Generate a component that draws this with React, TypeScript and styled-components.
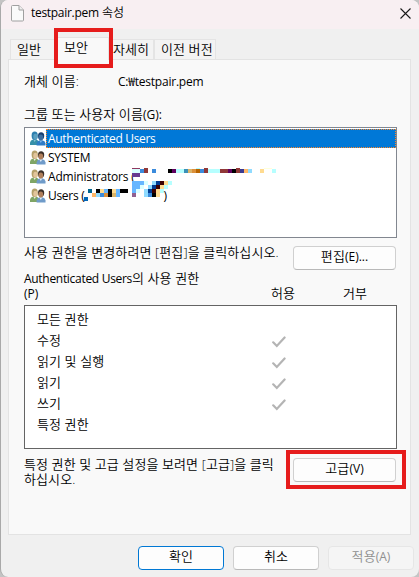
import React from "react";
import styled, { createGlobalStyle, css } from "styled-components";

const Global = createGlobalStyle`
  html, body { margin: 0; padding: 0; background: #c4c4c4; }
  * { box-sizing: border-box; }
  body { font-family: "Open Sans", "Noto Sans CJK KR", sans-serif; font-size: 13px; font-weight: 350; letter-spacing: 0.1px; color: #000; }
`;

const Dialog = styled.div`
  position: relative;
  width: 419px;
  height: 577px;
  display: flex;
  flex-direction: column;
  background: #f0f0f0;
  border-left: 1px solid #a9a9a9;
  border-radius: 8px;
  overflow: hidden;
`;

const TitleBar = styled.header`
  display: flex;
  align-items: center;
  flex: 0 0 29px;
  padding: 0 8px 3px 10px;
  background: #f8eff2;
`;
const TitleText = styled.h1`
  margin: 0 auto 0 7px;
  font-size: 12px;
  font-weight: 350;
  line-height: 20px;
  white-space: nowrap;
`;
const CloseButton = styled.button`
  display: flex;
  padding: 0;
  border: 0;
  background: none;
`;

/* Latin text is set smaller than the Hangul around it */
const Latin = styled.span<{ $ls?: number }>`
  font-size: 12px;
  font-weight: 400;
  letter-spacing: ${(p) => p.$ls ?? -0.3}px;
`;

const Line = styled.div`
  height: 15px;
  line-height: 13px;
  white-space: nowrap;
`;

const Tabs = styled.nav`
  display: flex;
  align-items: flex-end;
  height: 30px;
  padding-left: 9px;
`;
const Tab = styled.div<{ $w: number; $pad?: number; $active?: boolean }>`
  width: ${(p) => p.$w}px;
  height: 20px;
  padding-left: ${(p) => p.$pad ?? 6}px;
  line-height: 18px;
  white-space: nowrap;
  background: #f3f3f3;
  border: 1px solid #e4e4e4;
  border-bottom: 0;
  ${(p) =>
    p.$active &&
    css`
      position: relative;
      height: 23px;
      margin-bottom: -1px;
      background: #f9f9f9;
    `}
`;

const Panel = styled.main`
  display: flex;
  flex-direction: column;
  width: 403px;
  height: 476px;
  margin-left: 7px;
  padding: 15px 12px 0 15px;
  background: #f9f9f9;
  border: 1px solid #e3e3e3;
`;
const ObjectRow = styled.div`
  display: grid;
  grid-template-columns: 94px 1fr;
  margin-bottom: 18px;
`;
const UserList = styled.ul`
  width: 373px;
  height: 111px;
  margin: 4px 0 0;
  padding: 1px 0 0 5px;
  list-style: none;
  background: #fff;
  border: 1px solid #828790;
`;
const UserRow = styled.li`
  display: flex;
  align-items: center;
  height: 19px;
`;
const UserName = styled.div<{ $selected?: boolean }>`
  position: relative;
  flex: 1;
  height: 19px;
  padding-left: 1px;
  border: 1px solid transparent;
  line-height: 17px;
  white-space: nowrap;
  ${(p) =>
    p.$selected &&
    css`
      background: #0078d7;
      color: #fff;
      border: 1px dotted #ff8728;
    `}
`;
const Redaction = styled.svg`
  position: absolute;
  left: 37px;
  top: 0;
`;
const ClosingParen = styled.span`
  margin-left: 79px;
`;

const HintRow = styled.div<{ $top: number }>`
  display: flex;
  justify-content: space-between;
  align-items: flex-start;
  width: 372px;
  margin-top: ${(p) => p.$top}px;
`;
const Button = styled.button<{ $w: number; $kind?: "primary" | "disabled" }>`
  width: ${(p) => p.$w}px;
  height: 24px;
  padding: 0 0 3px;
  font: inherit;
  letter-spacing: inherit;
  line-height: 19px;
  white-space: nowrap;
  border-radius: 4px;
  background: ${(p) => (p.$kind === "disabled" ? "#f5f5f5" : "#fdfdfd")};
  color: ${(p) => (p.$kind === "disabled" ? "#8f8f8f" : "#000")};
  border: 1px solid
    ${(p) => (p.$kind === "primary" ? "#0078d4" : p.$kind === "disabled" ? "#e6e6e6" : "#d0d0d0")};
  ${(p) => !p.$kind && "border-bottom-color: #b9b9b9;"}
`;

const PermissionHeader = styled.div`
  display: grid;
  grid-template-columns: 247px 72px 1fr;
  align-items: end;
  height: 30px;
  margin-top: 2px;
`;
const PermissionList = styled.ul`
  width: 373px;
  height: 144px;
  margin: 3px 0 0;
  padding: 4px 0 0 12px;
  list-style: none;
  background: #fff;
  border: 1px solid #646464;
`;
const PermissionRow = styled.li`
  display: grid;
  grid-template-columns: 235px 1fr;
  align-items: center;
  height: 21px;
  line-height: 19px;
  white-space: nowrap;
`;
const PermissionName = styled.span`
  padding-bottom: 2px;
`;

const Footer = styled.footer`
  display: flex;
  gap: 9px;
  margin: 11px 0 0 137px;
`;

const Highlight = styled.div<{ $x: number; $y: number; $w: number; $h: number }>`
  position: absolute;
  left: ${(p) => p.$x}px;
  top: ${(p) => p.$y}px;
  width: ${(p) => p.$w}px;
  height: ${(p) => p.$h}px;
  border: 4px solid #e61c1c;
`;

const FileIcon = () => (
  <svg width="13" height="17" viewBox="0 0 13 17">
    <path d="M.5 1.5q0-1 1-1H8l4.5 4.5v10q0 1-1 1h-10q-1 0-1-1z" fill="#fafafa" stroke="#a0a0a0" />
    <path d="M8 .5V5h4.5" fill="#eee" stroke="#a0a0a0" />
  </svg>
);

const CloseIcon = () => (
  <svg width="11" height="11" viewBox="0 0 11 11">
    <path d="M.5.5l10 10M10.500.5l-10 10" stroke="#1a1a1a" strokeWidth="1.1" />
  </svg>
);

const UsersIcon = ({ selected }: { selected?: boolean }) => {
  const c = selected
    ? { hair: "#2d7fae", face: "#5a9fc0", body: "#3690a8", hair2: "#183f70", face2: "#3a6da0", body2: "#2f7cc6" }
    : { hair: "#b5a06a", face: "#e2c49b", body: "#7fa565", hair2: "#3c3029", face2: "#b07f5b", body2: "#6f9bc9" };
  return (
    <svg width="16" height="15" viewBox="0 0 17 15" preserveAspectRatio="none">
      <path d="M0 14v-2.500q.5-2.500 3.500-3h3q2.500.5 3 3V14z" fill={c.body} />
      <path d="M3.500 8.500L5 11l1.500-2.500" fill={selected ? "#8cc4d8" : "#e8f0e8"} />
      <ellipse cx="5" cy="4.800" rx="3.300" ry="4.200" fill={c.hair} />
      <ellipse cx="5.700" cy="5.800" rx="2.200" ry="3" fill={c.face} />
      <path d="M7 14.500v-2q.5-2.700 3.500-3.200h2.500q3 .5 3.500 3.200v2z" fill={c.body2} />
      <path d="M10 9.500l1.500 2.500L13 9.500" fill={selected ? "#80b8e8" : "#e3edf8"} />
      <ellipse cx="11.800" cy="5" rx="3.300" ry="3.700" fill={c.hair2} />
      <ellipse cx="11.500" cy="6.500" rx="2.500" ry="3" fill={c.face2} />
    </svg>
  );
};

const CheckIcon = () => (
  <svg width="14" height="12" viewBox="0 0 14 12">
    <path d="M1.200 6.300L4.800 10 12.600 1.500" fill="none" stroke="#b4b4b4" strokeWidth="2.200" strokeLinecap="round" />
  </svg>
);

/* Pixelated blocks: [x, y, width, height, colour] */
const MOSAIC: [number, number, number, number, string][] = [
  [48, 0, 8, 1, "#903860"], [48, 1, 8, 4, "#d8ffff"], [56, 1, 4, 4, "#3b8bdc"], [60, 0, 4, 5, "#903838"], [68, 1, 4, 4, "#3b8bdc"],
  [84, 1, 4, 4, "#000"], [88, 1, 4, 4, "#600060"], [92, 1, 8, 4, "#b6ffff"], [100, 1, 4, 4, "#3b90b8"],
  [104, 1, 4, 4, "#dbb468"], [108, 1, 4, 4, "#db903a"], [112, 1, 4, 4, "#b86400"], [112, 0, 4, 1, "#b6ffff"], [116, 1, 4, 4, "#3b8bdc"],
  [120, 0, 4, 5, "#903838"], [124, 1, 12, 4, "#b6ffff"], [136, 1, 8, 4, "#903838"], [144, 1, 4, 4, "#600060"],
  [148, 1, 4, 4, "#000"], [152, 0, 4, 5, "#903838"], [156, 1, 4, 4, "#3a3a90"], [160, 1, 4, 4, "#ffb666"],
  [164, 1, 4, 4, "#90dbff"], [176, 1, 4, 4, "#ffdb90"], [180, 0, 8, 1, "#ffffdb"], [188, 1, 4, 4, "#b6ffff"],
  [48, 5, 8, 4, "#663a90"],
  [48, 13, 12, 4, "#66b6ff"], [60, 13, 4, 4, "#dbffff"], [68, 13, 4, 4, "#90dbff"], [72, 13, 4, 4, "#003a90"],
  [76, 13, 4, 4, "#3a0000"], [80, 13, 4, 4, "#ffdb90"], [84, 13, 4, 4, "#b6ffff"],
  [48, 17, 8, 4, "#66b6ff"], [56, 17, 4, 4, "#dbffff"], [64, 17, 4, 4, "#90dbff"], [68, 17, 4, 4, "#003a90"],
  [72, 17, 4, 4, "#3a0000"], [76, 17, 4, 4, "#ffdb90"], [80, 17, 4, 4, "#b6ffff"],
  [48, 21, 4, 4, "#66b6ff"], [52, 21, 4, 4, "#dbffff"], [60, 21, 4, 4, "#90dbff"], [64, 21, 4, 4, "#003a90"],
  [68, 21, 4, 4, "#3a0000"], [72, 21, 4, 4, "#ffdb90"], [76, 21, 4, 4, "#b6ffff"],
  [48, 25, 4, 4, "#906090"], [60, 25, 4, 4, "#90dbff"], [64, 25, 4, 4, "#3b8bdc"], [68, 25, 4, 4, "#000"], [72, 25, 4, 4, "#ffdb90"],
  [4, 21, 4, 4, "#006690"], [12, 21, 4, 4, "#000"], [16, 21, 4, 4, "#ffdb90"], [20, 21, 4, 4, "#66b6ff"],
  [24, 21, 4, 4, "#000"], [28, 21, 4, 4, "#ffdb90"], [32, 21, 4, 4, "#66b6ff"], [36, 21, 8, 4, "#000"],
  [8, 25, 4, 4, "#ffb666"], [12, 25, 4, 4, "#90dbff"], [16, 25, 4, 4, "#3b8bdc"], [20, 25, 4, 4, "#db903a"],
  [24, 25, 4, 4, "#000"], [28, 25, 4, 4, "#dbb468"], [32, 25, 4, 4, "#66b6ff"], [0, 29, 4, 4, "#0066b6"],
];

const permissions: [string, boolean][] = [
  ["모든 권한", false],
  ["수정", true],
  ["읽기 및 실행", true],
  ["읽기", true],
  ["쓰기", true],
  ["특정 권한", false],
];

export default function App() {
  return (
    <>
      <Global />
      <Dialog>
        <TitleBar>
          <FileIcon />
          <TitleText><Latin>testpair.pem</Latin> 속성</TitleText>
          <CloseButton aria-label="닫기"><CloseIcon /></CloseButton>
        </TitleBar>
        <Tabs>
          <Tab $w={45}>일반</Tab>
          <Tab $w={54} $pad={8} $active>보안</Tab>
          <Tab $w={45} $pad={3}>자세히</Tab>
          <Tab $w={62}>이전 버전</Tab>
        </Tabs>
        <Panel>
          <ObjectRow>
            <Line>개체 이름:</Line>
            <Line><Latin $ls={-0.22}>C:₩testpair.pem</Latin></Line>
          </ObjectRow>
          <Line>그룹 또는 사용자 이름<Latin $ls={0}>(G):</Latin></Line>
          <UserList>
            <UserRow><UsersIcon selected /><UserName $selected><Latin $ls={-0.33}>Authenticated Users</Latin></UserName></UserRow>
            <UserRow><UsersIcon /><UserName><Latin>SYSTEM</Latin></UserName></UserRow>
            <UserRow>
              <UsersIcon />
              <UserName>
                <Latin $ls={-0.2}>Administrators (</Latin>
                <Redaction width="196" height="34" shapeRendering="crispEdges">
                  {MOSAIC.map(([x, y, w, h, fill], i) => (
                    <rect key={i} x={x} y={y} width={w} height={h} fill={fill} />
                  ))}
                </Redaction>
              </UserName>
            </UserRow>
            <UserRow><UsersIcon /><UserName><Latin>Users (<ClosingParen>)</ClosingParen></Latin></UserName></UserRow>
          </UserList>
          <HintRow $top={8}>
            <Line>사용 권한을 변경하려면 [편집]을 클릭하십시오.</Line>
            <Button $w={103}>편집<Latin $ls={0}>(E)...</Latin></Button>
          </HintRow>
          <PermissionHeader>
            <div>
              <Line><Latin>Authenticated Users</Latin>의 사용 권한</Line>
              <Line><Latin $ls={0}>(P)</Latin></Line>
            </div>
            <Line>허용</Line>
            <Line>거부</Line>
          </PermissionHeader>
          <PermissionList>
            {permissions.map(([name, allowed]) => (
              <PermissionRow key={name}>
                <PermissionName>{name}</PermissionName>
                {allowed && <CheckIcon />}
              </PermissionRow>
            ))}
          </PermissionList>
          <HintRow $top={9}>
            <div>
              <Line>특정 권한 및 고급 설정을 보려면 [고급]을 클릭</Line>
              <Line>하십시오.</Line>
            </div>
            <Button $w={103}>고급<Latin $ls={0}>(V)</Latin></Button>
          </HintRow>
        </Panel>
        <Footer>
          <Button $w={86} $kind="primary">확인</Button>
          <Button $w={86}>취소</Button>
          <Button $w={86} $kind="disabled">적용<Latin $ls={0}>(A)</Latin></Button>
        </Footer>
        <Highlight $x={53} $y={28} $w={59} $h={40} />
        <Highlight $x={285} $y={450} $w={120} $h={39} />
      </Dialog>
    </>
  );
}
